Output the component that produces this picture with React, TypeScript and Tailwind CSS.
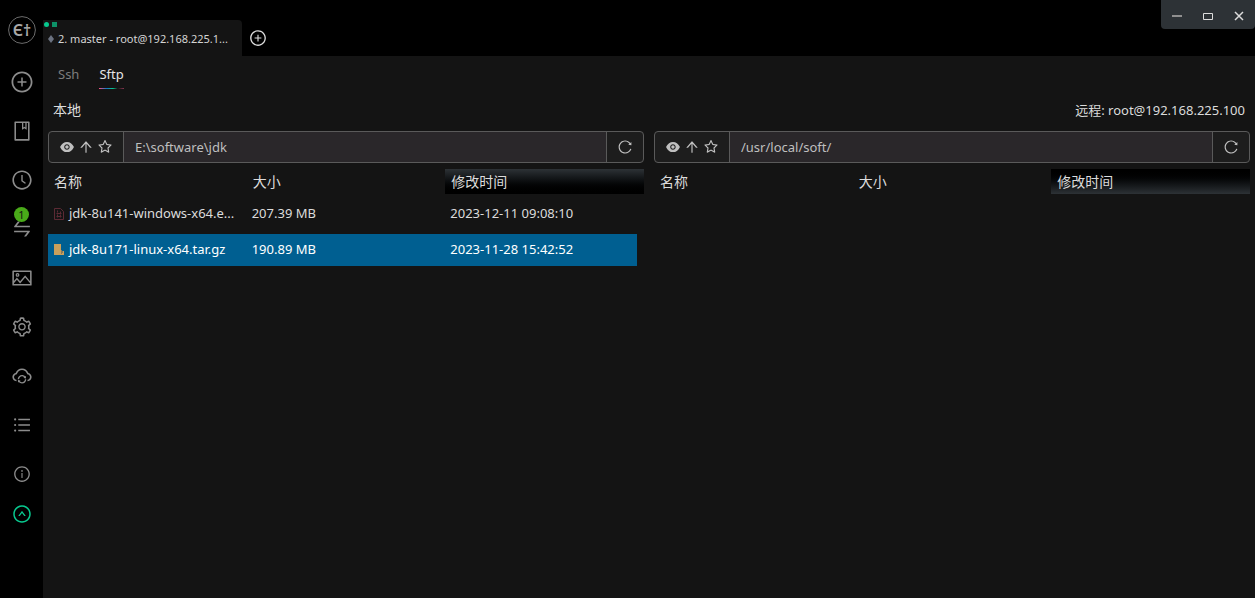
import type { ReactNode } from 'react';
import clsx from 'clsx';
import {
  AiFillEye,
  AiOutlineArrowUp,
  AiOutlineClockCircle,
  AiOutlineCloudSync,
  AiOutlineInfoCircle,
  AiOutlinePicture,
  AiOutlinePlusCircle,
  AiOutlineReload,
  AiOutlineSetting,
  AiOutlineStar,
  AiOutlineSwap,
  AiOutlineUnorderedList,
  AiOutlineUpCircle,
  AiOutlineBook,
} from 'react-icons/ai';

interface FileItem {
  name: string;
  size: string;
  modified: string;
  kind: 'exe' | 'archive';
  selected: boolean;
}

const localFiles: FileItem[] = [
  { name: 'jdk-8u141-windows-x64.e...', size: '207.39 MB', modified: '2023-12-11 09:08:10', kind: 'exe', selected: false },
  { name: 'jdk-8u171-linux-x64.tar.gz', size: '190.89 MB', modified: '2023-11-28 15:42:52', kind: 'archive', selected: true },
];

const sidebarItems: { label: string; icon: ReactNode; badge?: string }[] = [
  { label: 'New', icon: <AiOutlinePlusCircle size={24} /> },
  { label: 'Bookmarks', icon: <AiOutlineBook size={22} /> },
  { label: 'History', icon: <AiOutlineClockCircle size={22} /> },
  { label: 'Transfers', icon: <AiOutlineSwap size={22} />, badge: '1' },
  { label: 'Themes', icon: <AiOutlinePicture size={22} /> },
  { label: 'Settings', icon: <AiOutlineSetting size={22} /> },
  { label: 'Sync', icon: <AiOutlineCloudSync size={22} /> },
  { label: 'Batch', icon: <AiOutlineUnorderedList size={20} /> },
  { label: 'About', icon: <AiOutlineInfoCircle size={18} /> },
];

function Logo() {
  return (
    <svg width="28" height="28" viewBox="0 0 28 28" aria-label="Et">
      <circle cx="14" cy="14" r="13.4" fill="none" stroke="#6b6b6b" strokeWidth="1" />
      <text
        x="14"
        y="20"
        textAnchor="middle"
        fontSize="16"
        fontWeight="600"
        fill="#a8a8a8"
        className="font-['Noto_Sans',sans-serif]"
      >
        Є†
      </text>
    </svg>
  );
}

function FileIcon({ kind }: { kind: FileItem['kind'] }) {
  if (kind === 'exe') {
    return (
      <svg width="10" height="12" viewBox="0 0 10 12" className="mt-[2px] shrink-0" fill="none" stroke="#5c2a34">
        <path d="M.5 .5h6l3 3v8h-9z" />
        <path d="M3.5 2.5v2M6.5 3.5v2M3.5 6.5v3M6.5 6.5v3M2.5 5.5h5M2.5 8.5h5" />
      </svg>
    );
  }
  return (
    <svg width="10" height="12" viewBox="0 0 10 12" className="mt-[2px] shrink-0">
      <path d="M0 0h7v6l1 1h2v4H0z" fill="#c9a05c" />
      <path d="M7 6h1v1h1v2H8v1H7z" fill="#8a7a5c" />
    </svg>
  );
}

function Sidebar() {
  return (
    <aside className="flex w-[43px] shrink-0 flex-col items-center bg-black pl-px text-[#8c8c8c]">
      <div className="h-[57px] pt-4">
        <Logo />
      </div>
      {sidebarItems.map(item => (
        <button key={item.label} aria-label={item.label} className="relative flex h-[49px] w-full items-center justify-center">
          {item.icon}
          {item.badge && (
            <span className="absolute top-[3px] left-[13px] flex size-[15px] items-center justify-center rounded-full bg-[#49aa19] text-[11px] leading-none text-[#141414]">
              {item.badge}
            </span>
          )}
        </button>
      ))}
      <button aria-label="Upgrade" className="flex h-8 w-full items-center justify-center text-[#08c98f]">
        <AiOutlineUpCircle size={20} />
      </button>
    </aside>
  );
}

function TitleBar() {
  return (
    <header className="flex h-14 items-start bg-black">
      <div className="mt-5 flex h-9 w-[199px] flex-col rounded-tr-sm bg-[#141414]">
        <div className="flex gap-[3px] pt-[2px] pl-px">
          <span className="size-[5px] rounded-full bg-[#08c98f]" />
          <span className="size-[5px] bg-[#0d9268]" />
        </div>
        <div className="flex items-center pl-[5px] text-[#d4d4d4]">
          <svg width="6" height="8" viewBox="0 0 6 8" className="mr-1 shrink-0">
            <path d="M3 0l3 4-3 4-3-4z" fill="#6b7280" />
          </svg>
          <span className="text-[11px] leading-6 whitespace-nowrap">2. master - root@192.168.225.1...</span>
        </div>
      </div>
      <button aria-label="New tab" className="mt-[29px] ml-[7px] text-[#dcdcdc]">
        <AiOutlinePlusCircle size={18} />
      </button>
      <div className="ml-auto flex h-[29px] rounded-b-sm bg-[#2d3236] pr-px text-[#dcdcdc]">
        <button aria-label="Minimize" className="flex w-[31px] items-center justify-center pt-[3px]">
          <svg width="10" height="2"><path d="M0 1h10" stroke="#8f8f8f" strokeWidth="2" /></svg>
        </button>
        <button aria-label="Maximize" className="flex w-[31px] items-center justify-center pt-[3px]">
          <svg width="10" height="7"><path d="M.5 .5h9v6h-9z" fill="none" stroke="currentColor" /></svg>
        </button>
        <button aria-label="Close" className="flex w-[31px] items-center justify-center pt-[3px]">
          <svg width="10" height="10"><path d="M1 1l8 8M9 1l-8 8" stroke="currentColor" strokeWidth="1.5" /></svg>
        </button>
      </div>
    </header>
  );
}

function PathBar({ label, path }: { label: string; path: string }) {
  return (
    <div className="flex h-8 overflow-hidden rounded-sm border border-[#5a5a5a] bg-[#1d1d1d] text-[#bfbfbf]">
      <div className="flex w-[75px] shrink-0 items-center justify-center gap-[3px] border-r border-[#5a5a5a]">
        <button aria-label="Show hidden files"><AiFillEye size={16} /></button>
        <button aria-label="Go to parent"><AiOutlineArrowUp size={16} /></button>
        <button aria-label="Add bookmark"><AiOutlineStar size={16} /></button>
      </div>
      <input
        type="text"
        aria-label={label}
        defaultValue={path}
        className="min-w-0 flex-1 bg-[#2a272a] px-[11px] text-[13px] text-[#bfbfbf] outline-none"
      />
      <button aria-label="Reload" className="flex w-[37px] shrink-0 items-center justify-center border-l border-[#5a5a5a]">
        <AiOutlineReload size={16} />
      </button>
    </div>
  );
}

function FileTable({ files, sort }: { files: FileItem[]; sort: 'asc' | 'desc' }) {
  return (
    <table className="mt-[2px] w-full table-fixed border-separate border-spacing-x-0 border-spacing-y-1 text-left">
      <colgroup>
        <col className="w-1/3" />
        <col className="w-1/3" />
        <col />
        <col className="w-[7px]" />
      </colgroup>
      <thead className="text-[14px]">
        <tr className="h-[25px]">
          <th className="px-[6px] py-0 font-normal">名称</th>
          <th className="px-[6px] py-0 font-normal">大小</th>
          <th
            colSpan={2}
            className={clsx(
              'px-[6px] py-0 font-normal',
              sort === 'desc' ? 'bg-linear-to-b from-[#2d3236] to-black' : 'bg-linear-to-t from-[#2d3236] to-black',
            )}
          >
            修改时间
          </th>
        </tr>
      </thead>
      <tbody>
        {files.map(file => (
          <tr key={file.name} className={clsx('h-8', file.selected && 'text-white')}>
            <td className={clsx('px-[6px] pt-0 pb-[2px]', file.selected && 'bg-[#005f91]')}>
              <div className="flex items-center gap-[5px] whitespace-nowrap">
                <FileIcon kind={file.kind} />
                {file.name}
              </div>
            </td>
            <td className={clsx('px-[5px] pt-0 pb-[2px]', file.selected && 'bg-[#005f91]')}>{file.size}</td>
            <td className={clsx('px-[5px] pt-0 pb-[2px]', file.selected && 'bg-[#005f91]')}>{file.modified}</td>
          </tr>
        ))}
      </tbody>
    </table>
  );
}

export default function App() {
  return (
    <div className="flex min-h-screen bg-[#141414] font-['Noto_Sans','Noto_Sans_CJK_SC',sans-serif] text-[13px] leading-5 text-[#dcdcdc]">
      <Sidebar />
      <div className="flex min-w-0 flex-1 flex-col">
        <TitleBar />
        <nav className="flex h-[34px] gap-5 px-[15px] pt-2">
          <button className="flex flex-col text-[#7d7d7d]">Ssh</button>
          <button className="flex flex-col text-[#e6e6e6]">
            Sftp
            <span className="mt-1 h-px w-full bg-[linear-gradient(90deg,#ff4d7d,#1677c8_30%,#08c98f_55%,#141414_75%,#8a3550)]" />
          </button>
        </nav>
        <main className="grid grid-cols-2 gap-[10px] px-[5px]">
          <section>
            <h2 className="px-[5px] pt-[10px] pb-[11px] text-[14px]">本地</h2>
            <PathBar label="本地" path="E:\software\jdk" />
            <FileTable files={localFiles} sort="desc" />
          </section>
          <section>
            <h2 className="px-[5px] pt-[10px] pb-[11px] text-right">远程: root@192.168.225.100</h2>
            <PathBar label="远程" path="/usr/local/soft/" />
            <FileTable files={[]} sort="asc" />
          </section>
        </main>
      </div>
    </div>
  );
}
